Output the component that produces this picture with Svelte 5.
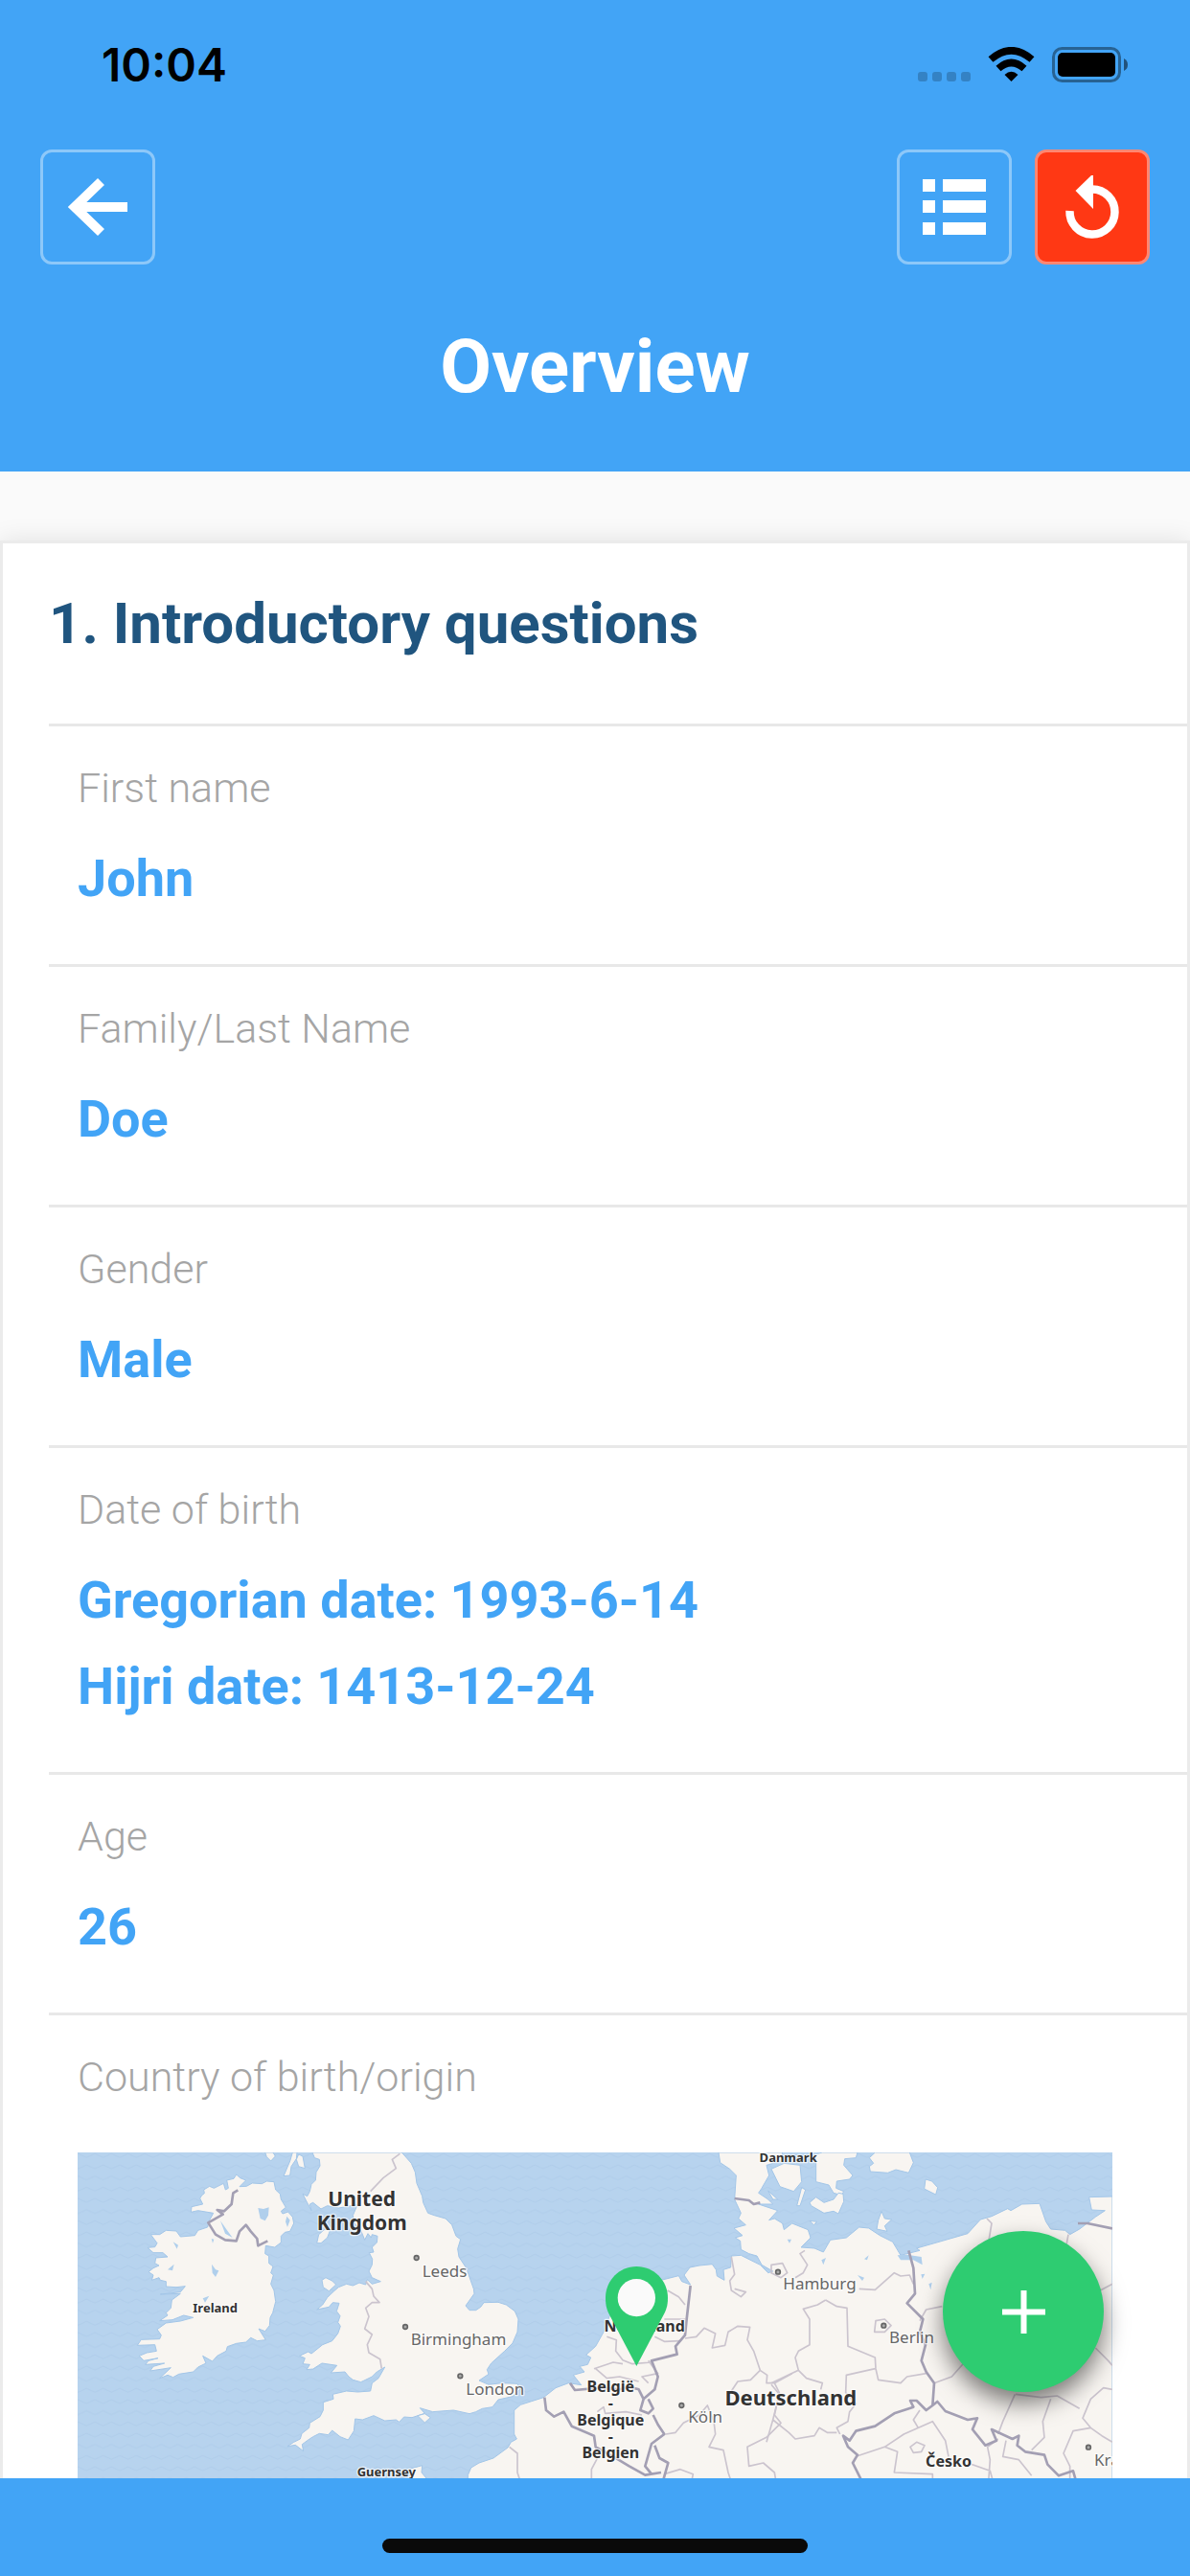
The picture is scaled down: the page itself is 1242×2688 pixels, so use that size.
<script>
  const fields = [
    { label: "First name", values: ["John"] },
    { label: "Family/Last Name", values: ["Doe"] },
    { label: "Gender", values: ["Male"] },
    {
      label: "Date of birth",
      values: ["Gregorian date: 1993-6-14", "Hijri date: 1413-12-24"],
    },
    { label: "Age", values: ["26"] },
  ];

  // map units, three to a pixel at full phone width
  const countries = [
    { name: "United", x: 953, y: 245, size: 63 },
    { name: "Kingdom", x: 953, y: 320, size: 63 },
    { name: "Ireland", x: 494, y: 578, size: 39 },
    { name: "Guernsey", x: 1030, y: 1092, size: 39 },
    { name: "Nederland", x: 1838, y: 640, size: 48 },
    { name: "België", x: 1732, y: 828, size: 48 },
    { name: "-", x: 1732, y: 880, size: 48 },
    { name: "Belgique", x: 1732, y: 932, size: 48 },
    { name: "-", x: 1732, y: 984, size: 48 },
    { name: "Belgien", x: 1732, y: 1036, size: 48 },
    { name: "Danmark", x: 2288, y: 107, size: 39 },
    { name: "Deutschland", x: 2296, y: 870, size: 66 },
    { name: "Česko", x: 2790, y: 1062, size: 48 },
  ];

  const cities = [
    { name: "Leeds", x: 1142, y: 468, dotX: 1124, dotY: 408 },
    { name: "Birmingham", x: 1106, y: 682, dotX: 1089, dotY: 624 },
    { name: "London", x: 1279, y: 837, dotX: 1261, dotY: 778 },
    { name: "Köln", x: 1975, y: 924, dotX: 1954, dotY: 870 },
    { name: "Hamburg", x: 2272, y: 508, dotX: 2256, dotY: 452 },
    { name: "Berlin", x: 2604, y: 674, dotX: 2587, dotY: 620 },
    { name: "Kraków", x: 3246, y: 1060, dotX: 3228, dotY: 1001 },
  ];
</script>

<div class="screen">
  <header>
    <div class="status">
      <time>10:04</time>
      <svg class="indicators" viewBox="0 0 220 38" aria-hidden="true">
        <g opacity="0.2">
          <rect x="0" y="26" width="10" height="10" rx="3" />
          <rect x="15" y="26" width="10" height="10" rx="3" />
          <rect x="30" y="26" width="10" height="10" rx="3" />
          <rect x="45" y="26" width="10" height="10" rx="3" />
        </g>
        <path d="M97.5 36 L90.5 29 Q97.5 22.5 104.5 29 Z" />
        <g fill="none" stroke="#000" stroke-width="7.5">
          <path d="M84 22.5 Q97.5 10.5 111 22.5" />
          <path d="M76 13 Q97.5 -5.5 119 13" />
        </g>
        <rect x="141.5" y="1.5" width="69" height="34" rx="9" fill="none" stroke="#000" stroke-width="3" opacity="0.4" />
        <rect x="146" y="6" width="60" height="25" rx="5" />
        <path d="M215 12 Q219 14 219 18.5 Q219 23 215 25 Z" opacity="0.5" />
      </svg>
    </div>

    <nav>
      <button class="tool" aria-label="Back">
        <svg viewBox="0 0 120 120">
          <path d="M63.5 33.5 L36 60 L63.5 86.500 M40 60 H91" />
        </svg>
      </button>
      <button class="tool push" aria-label="Sections">
        <svg viewBox="0 0 120 120">
          <path
            class="solid"
            d="M27 31h13v13h-13z M48 31h45v13h-45z M27 53h13v13h-13z M48 53h45v13h-45z M27 76h13v13h-13z M48 76h45v13h-45z"
          />
        </svg>
      </button>
      <button class="tool danger" aria-label="Restart">
        <svg viewBox="0 0 120 120">
          <path d="M36.5 64 A23.5 23.5 0 1 0 60 41.5" stroke-width="8.5" />
          <path class="solid" d="M42.5 43 L59 27 H61 V62 Z" />
        </svg>
      </button>
    </nav>

    <h1>Overview</h1>
  </header>

  <main>
    <section>
      <h2>1. Introductory questions</h2>
      <dl>
        {#each fields as { label, values }}
          <div class="field">
            <dt>{label}</dt>
            {#each values as value}
              <dd>{value}</dd>
            {/each}
          </div>
        {/each}
        <div class="field">
          <dt>Country of birth/origin</dt>
          <dd class="map">
            <svg viewBox="63 78 3240 1620" role="img" aria-label="Map of north-west Europe">
              <defs>
                <pattern id="waves" width="52" height="70" patternUnits="userSpaceOnUse">
                  <path d="M0 18 L13 12 L26 18 L39 24 L52 18 M0 53 L13 59 L26 53 L39 47 L52 53" fill="none" stroke="#b0cdea" stroke-width="3" />
                </pattern>
              </defs>
              <rect x="63" y="78" width="3240" height="1620" fill="#b7d3ee" />
              <rect x="63" y="78" width="3240" height="1620" fill="url(#waves)" />

              <g class="land">
                <!-- Ireland -->
                <path d="M590 165 L570 185 L592 184 L610 174 L640 176 L655 168 L678 170 L683 195 L697 208 L700 225 L715 250 L700 262 L705 270 L722 264 L736 280 L740 300 L728 325 L712 328 L700 340 L700 360 L680 375 L652 370 L650 395 L662 402 L662 425 L675 435 L668 455 L676 462 L668 490 L678 510 L683 545 L674 580 L666 595 L664 620 L650 638 L630 630 L652 665 L625 668 L605 658 L590 672 L560 676 L532 686 L528 700 L500 715 L485 732 L455 715 L465 738 L440 750 L425 765 L380 772 L362 782 L345 775 L320 785 L355 752 L290 762 L300 748 L335 738 L275 742 L285 730 L315 722 L270 730 L256 715 L280 705 L310 700 L305 680 L250 682 L262 664 L320 662 L325 650 L312 632 L340 612 L385 606 L425 595 L395 588 L360 602 L320 605 L345 588 L340 580 L355 565 L358 540 L385 520 L322 522 L385 515 L400 497 L372 500 L340 498 L340 482 L322 478 L318 470 L295 478 L300 462 L285 452 L300 440 L318 432 L305 425 L308 408 L345 405 L330 392 L300 392 L282 376 L305 374 L312 362 L292 335 L320 335 L340 322 L372 324 L385 342 L430 338 L440 322 L470 312 L475 292 L488 268 L440 260 L418 265 L420 248 L455 240 L446 222 L452 212 L460 206 L458 195 L476 184 L490 190 L520 175 L526 195 L535 190 L530 165 L552 160 L560 147 L572 158 Z" />
                <!-- Great Britain -->
                <path d="M798 78 L805 95 L820 100 L822 120 L810 140 L808 165 L795 178 L790 200 L782 215 L768 208 L778 228 L795 260 L790 240 L800 235 L825 255 L845 245 L880 252 L905 248 L940 240 L925 275 L930 300 L950 322 L962 352 L972 332 L982 345 L985 335 L1002 340 L1000 360 L985 375 L990 390 L976 392 L986 412 L985 430 L975 450 L985 470 L1012 482 L985 490 L970 476 L965 492 L945 486 L925 495 L905 490 L880 500 L866 512 L845 532 L830 555 L812 570 L850 562 L862 548 L882 550 L874 575 L885 590 L878 610 L886 622 L878 645 L860 668 L830 680 L795 708 L785 702 L758 715 L775 722 L768 740 L790 742 L780 758 L800 756 L828 738 L855 742 L875 745 L856 768 L900 765 L912 780 L925 790 L950 797 L985 780 L1000 765 L1025 750 L1005 785 L985 800 L980 825 L940 828 L905 825 L862 835 L864 850 L832 860 L832 885 L822 905 L790 925 L788 940 L765 958 L760 975 L740 985 L720 998 L745 994 L770 1013 L766 992 L785 978 L800 968 L820 958 L848 962 L860 948 L885 968 L910 978 L928 950 L932 912 L955 915 L990 902 L1025 918 L1060 915 L1070 922 L1085 906 L1110 908 L1150 895 L1135 878 L1175 890 L1200 888 L1240 885 L1290 896 L1310 890 L1330 880 L1362 875 L1380 852 L1425 842 L1448 820 L1440 802 L1390 800 L1350 805 L1320 792 L1350 772 L1345 758 L1358 738 L1400 700 L1425 675 L1440 640 L1443 600 L1432 575 L1405 555 L1380 547 L1335 548 L1325 562 L1310 572 L1290 572 L1278 558 L1305 520 L1303 505 L1280 440 L1257 405 L1253 380 L1262 350 L1248 340 L1235 305 L1215 285 L1180 275 L1160 268 L1145 235 L1142 215 L1125 175 L1120 140 L1108 112 L1078 78 Z" />
                <path d="M828 478 L840 470 L860 480 L872 492 L850 512 L832 500 Z M812 362 L818 335 L835 320 L855 318 L845 345 L825 362 Z" />
                <path d="M736 78 L728 105 L708 152 L728 150 L732 122 L748 98 L750 78 Z M755 84 L768 90 L775 128 L755 122 L748 100 Z M650 78 L655 92 L668 105 L682 90 L675 78 Z" />
                <path d="M1128 902 L1150 896 L1168 908 L1150 924 Z M1112 1098 L1105 1068 L1142 1058 L1140 1080 L1155 1098 L1155 1120 L1112 1120 Z" />
                <!-- Continent -->
                <path d="M1285 1088 L1295 1065 L1320 1050 L1365 1035 L1410 1002 L1420 985 L1438 975 L1430 960 L1430 885 L1450 868 L1522 845 L1560 815 L1600 800 L1640 806 L1615 775 L1650 765 L1635 748 L1660 742 L1670 720 L1655 712 L1685 685 L1710 640 L1740 560 L1760 510 L1830 500 L1890 478 L1945 464 L1955 482 L1982 492 L1962 462 L1980 438 L2010 432 L2050 428 L2062 445 L2065 465 L2088 478 L2085 445 L2108 438 L2110 402 L2140 400 L2160 410 L2200 430 L2225 455 L2240 450 L2205 430 L2190 402 L2165 395 L2140 382 L2138 355 L2122 345 L2145 338 L2118 315 L2155 305 L2132 285 L2140 268 L2120 225 L2125 150 L2105 130 L2075 110 L2070 78 L2270 78 L2265 105 L2220 118 L2228 150 L2205 190 L2195 205 L2225 225 L2240 240 L2195 240 L2255 260 L2228 290 L2245 285 L2270 300 L2275 320 L2300 300 L2350 320 L2358 345 L2328 375 L2370 378 L2398 390 L2420 352 L2470 345 L2510 312 L2540 315 L2575 338 L2615 358 L2640 400 L2700 385 L2690 378 L2760 358 L2850 332 L2890 288 L2925 278 L2975 254 L2985 260 L3020 240 L3075 238 L3095 295 L3110 318 L3155 322 L3170 335 L3200 318 L3250 280 L3280 260 L3238 258 L3230 218 L3303 216 V1698 H1285 Z" />
                <path d="M2235 130 L2275 112 L2325 118 L2330 170 L2305 200 L2262 185 Z M2375 110 L2372 84 L2395 78 H2505 L2500 95 L2465 98 L2462 118 L2490 150 L2480 162 L2440 168 L2438 190 L2462 200 L2455 212 L2430 205 L2415 180 L2375 170 Z" />
                <path d="M2542 95 L2560 78 H2668 L2680 110 L2665 142 L2625 132 L2600 142 L2545 138 L2542 122 L2555 112 Z M2718 162 L2738 168 L2756 188 L2750 210 L2714 192 Z" />
                <path d="M2355 235 L2375 218 L2400 235 L2430 225 L2445 205 L2460 208 L2462 232 L2445 270 L2430 262 L2400 268 L2360 245 Z M2570 290 L2580 262 L2590 285 L2612 288 L2590 308 L2598 325 L2565 318 Z" />
                <path d="M2330 188 L2342 195 L2325 245 L2315 245 Z M2355 292 L2378 295 L2368 305 Z M2225 198 L2255 225 L2240 225 Z" />
              </g>

              <!-- lakes and inlets -->
              <path
                fill="#b0cfec"
                d="M628 252 L645 255 L662 250 L660 275 L650 292 L635 285 Z M718 278 L728 290 L720 312 L714 295 Z M483 428 L495 445 L505 448 L495 468 L485 455 Z M362 358 L378 368 L374 380 Z M482 348 L490 350 L486 362 Z M455 535 L475 527 L462 548 Z M345 445 L365 428 L360 448 Z M510 292 L530 320 L548 345 L525 332 Z M2630 400 L2660 398 L2705 405 L2708 430 L2680 415 L2640 415 Z M2392 415 L2406 408 L2398 430 Z M2526 412 L2540 400 L2535 415 Z M2505 462 L2526 470 L2520 480 Z M2704 460 L2716 458 L2708 474 Z M2728 490 L2738 485 L2734 508 Z M2285 350 L2298 350 L2292 362 Z"
              />

              <g class="thin">
                <path d="M1072 82 L1048 100 L1060 128 L1020 158 L980 200 M965 482 L985 505 L990 528 L1008 548 L985 548 L965 565 L975 592 L962 630 L985 648 L970 680 L975 705 L1010 725 L1015 755" />
                <!-- Low Countries and France -->
                <path d="M1680 755 L1740 735 L1770 740 M1720 655 L1750 665 L1748 700 L1770 728 L1800 740 L1860 735 M1870 655 L1900 670 L1950 668 M1910 510 L1945 530 L1965 555 M1900 600 L1965 600 M1685 755 L1720 785 L1760 780 L1820 795 M1690 890 L1710 875 L1715 895 L1780 890 L1830 900 M1415 1000 L1440 1020 L1440 1080 L1450 1110 M1690 1036 L1672 1070 L1672 1110 M1850 730 L1880 770 L1830 780 L1850 800" />
                <!-- western Germany -->
                <path d="M1965 660 L2000 655 L2025 628 L2060 645 L2050 690 L2090 682 L2100 640 L2130 622 L2168 625 L2160 665 L2180 700 L2200 760 L2170 790 L2130 795 L2110 825 M2200 760 L2222 775 L2220 800 L2245 800 L2300 770 M2110 405 L2120 460 L2105 480 L2110 510 L2140 530 L2155 515 L2120 505 M1905 960 L1935 955 L1960 925 L2010 900 L2035 870 L2055 920 L2060 960 L2040 1000 L2085 1010 L2100 1080 L2110 1110 M2245 800 L2260 830 L2245 900 L2265 925 L2220 970 L2160 1000 L2165 1060 L2210 1050 L2245 1080 L2250 1110 M1900 1085 L1950 1070 L1990 1085 L1985 1110" />
                <!-- eastern Germany -->
                <path d="M2340 385 L2325 395 L2348 430 L2335 455 L2310 470 M2510 505 L2560 508 L2620 455 L2640 465 L2668 462 L2680 490 M2405 540 L2380 555 L2335 568 L2355 600 L2355 680 L2320 700 L2310 720 L2320 760 L2235 800 M2405 540 L2440 560 L2472 565 L2475 685 L2560 720 L2562 755 L2570 790 L2640 800 L2660 780 L2720 770 M2560 755 L2470 775 L2468 830 L2500 865 L2480 890 L2475 920 L2440 940 L2450 960 M2235 805 L2260 835 L2240 915 L2290 955 L2310 975 L2370 965 L2385 940 L2410 955 L2440 955 M2320 760 L2345 785 L2395 800 L2390 820 M2240 915 L2220 985 M2558 640 L2562 605 L2590 600 L2610 620 L2590 640 Z M2235 430 L2270 425 L2285 455 L2265 470 L2235 455 Z" />
                <!-- Poland and Bohemia -->
                <path d="M2910 285 L2925 300 L2915 360 M3165 335 L3155 390 M2700 605 L2720 570 L2770 560 M2745 800 L2800 780 L2840 735 M3303 490 L3265 510 M3250 690 L3290 730 L3303 745 M2998 835 L2960 920 L2945 960 M3000 835 L3080 845 L3130 840 L3200 880 M3110 850 L3085 920 L3090 970 L3050 1010 M3303 820 L3275 815 L3235 850 L3210 910 L3235 940 L3270 965 L3303 985 M3235 940 L3180 950 L3150 1020 L3170 1060 L3170 1110 M2500 1030 L2590 1000 L2630 1015 L2620 1080 L2740 1085 L2740 1110 M2590 1000 L2650 960 L2740 920 L2780 980 L2790 1030 M2700 885 L2680 915 L2695 940 M2850 1050 L2920 1075 L2930 1110 M2915 1110 L2920 1040 L2912 1000 L2945 975 M2970 980 L2960 1030 L3010 1040 L3050 1090 M2670 1000 L2690 985 L2715 995 L2705 1015 L2680 1018 Z" />
              </g>

              <g class="border">
                <path d="M565 196 L550 205 L545 240 L522 262 L500 258 L518 272 L472 298 L495 335 L525 352 L560 355 L570 325 L590 305 L605 325 L625 348 L628 370 L658 355" />
                <path d="M1982 495 L1970 600 L1965 650 L1935 685 L1940 710 L1860 730 L1880 780 L1870 820 L1835 850 L1825 885 L1850 895 L1865 880 L1850 850 M1835 850 L1820 820 L1790 812 L1760 820 L1700 815 L1620 822 L1605 800" />
                <path d="M1525 845 L1530 885 L1555 905 L1585 890 L1610 935 L1680 965 L1685 1000 L1740 1030 L1790 1060 L1840 1088 L1890 1080 M1865 900 L1880 930 L1900 960 L1860 990 L1840 1060 L1860 1085 M1870 995 L1885 1035 L1912 1050 L1895 1110" />
                <path d="M2120 222 L2165 228 L2180 240 L2200 235 M2665 385 L2680 440 L2685 520 L2660 550 L2710 600 L2700 640 L2718 680 L2705 730 L2720 765 L2745 800 L2740 870 L2720 885 L2690 855 L2670 855 L2680 875 L2620 895 L2560 935 L2500 950 L2480 980 L2460 965 L2475 1000 L2505 1025 L2490 1050 L2520 1110 M2740 870 L2755 858 L2780 888 L2850 915 L2880 910 L2865 945 L2905 995 L2940 980 L2925 945 L2990 975 L3010 965 L3005 995 L3030 1015 L3090 1025 L3100 1055 L3135 1090 L3180 1075 L3190 1110 M3195 300 L3225 300 L3303 316" />
              </g>

              {#each cities as { name, x, y, dotX, dotY }}
                <circle class="town" cx={dotX} cy={dotY} r="7" />
                <text class="city" {x} {y}>{name}</text>
              {/each}
              {#each countries as { name, x, y, size }}
                <text class="country" {x} {y} font-size={size}>{name}</text>
              {/each}

              <path
                fill="#2ecc71"
                d="M1813 435 C1867 435 1911 479 1911 533 C1911 560 1905 573 1895 592 L1813 747 L1731 592 C1721 573 1716 560 1716 533 C1716 479 1759 435 1813 435 Z"
              />
              <circle cx="1813" cy="533" r="59" fill="#fafafa" />
            </svg>
          </dd>
        </div>
      </dl>
    </section>
  </main>

  <footer>
    <button class="add" aria-label="Add">
      <svg viewBox="0 0 45 45"><path d="M0 22.5 H45 M22.5 0 V45" /></svg>
    </button>
    <div class="home"></div>
  </footer>
</div>

<style>
  :global(body) {
    margin: 0;
  }

  .screen {
    display: flex;
    flex-direction: column;
    height: 100vh;
    overflow: hidden;
    background-color: #fafafa;
    font-family: Roboto, "Open Sans", sans-serif;
  }

  header {
    flex: none;
    padding: 0 42px 64px;
    background-color: #42a4f6;
    color: white;
  }

  .status {
    display: flex;
    align-items: center;
    justify-content: space-between;
    padding: 38px 22px 34px 64px;
    color: black;
  }

  time {
    font-family: Inter, sans-serif;
    font-size: 48px;
    font-weight: 600;
    line-height: 60px;
  }

  .indicators {
    width: 220px;
    height: 38px;
  }

  nav {
    display: flex;
    gap: 24px;
    padding-top: 24px;
  }

  .tool {
    width: 120px;
    height: 120px;
    padding: 0;
    border: 3px solid rgba(255, 255, 255, 0.4);
    border-radius: 12px;
    background-color: transparent;
  }

  .tool svg {
    display: block;
    width: 120px;
    height: 120px;
    margin: -3px;
    fill: none;
    stroke: white;
    stroke-width: 10;
  }

  .tool .solid {
    fill: white;
    stroke: none;
  }

  .push {
    margin-left: auto;
  }

  .danger {
    background-color: #ff3814;
  }

  h1 {
    margin: 62px 0 0;
    font-size: 78px;
    font-weight: 700;
    line-height: 90px;
    text-align: center;
  }

  main {
    flex: 1;
    min-height: 0;
    padding-top: 72px;
    overflow: hidden;
  }

  section {
    border: 3px solid #ebebeb;
    padding-left: 48px;
    background-color: white;
    box-shadow: 0 0 24px rgba(0, 0, 0, 0.1);
  }

  h2 {
    margin: 0;
    padding: 48px 0 68px;
    color: #20557f;
    font-size: 60px;
    font-weight: 700;
    line-height: 72px;
  }

  dl {
    margin: 0;
  }

  .field {
    padding: 34px 78px 44px 30px;
    border-top: 3px solid #e8e8e8;
  }

  dt {
    margin-bottom: 20px;
    color: #a5a5a5;
    font-size: 43px;
    font-weight: 300;
    line-height: 60px;
  }

  dd {
    margin: 0;
    color: #42a4f6;
    font-size: 54px;
    font-weight: 700;
    line-height: 90px;
  }

  .map {
    margin-top: 49px;
    line-height: 0;
  }

  .map svg {
    width: 100%;
  }

  .land path {
    fill: #f8f5f1;
    stroke: #a3c6e8;
    stroke-width: 3;
    stroke-linejoin: round;
  }

  .thin path {
    fill: none;
    stroke: #cbc4ce;
    stroke-width: 5;
    stroke-linejoin: round;
  }

  .border path {
    fill: none;
    stroke: #a39fb3;
    stroke-width: 8;
    stroke-linejoin: round;
  }

  .town {
    fill: #aaa;
    stroke: #666;
    stroke-width: 5;
  }

  .map text {
    font-family: "Noto Sans", sans-serif;
    paint-order: stroke;
    stroke: rgba(255, 255, 255, 0.7);
    stroke-width: 8;
    stroke-linejoin: round;
  }

  .city {
    fill: #666;
    font-size: 51px;
    font-weight: 400;
  }

  .country {
    fill: #333;
    font-weight: 700;
    text-anchor: middle;
  }

  footer {
    position: relative;
    flex: none;
    display: flex;
    justify-content: center;
    padding: 63px 0 24px;
    background-color: #42a4f6;
  }

  .home {
    width: 444px;
    height: 15px;
    border-radius: 8px;
    background-color: #0a0a0a;
  }

  .add {
    position: absolute;
    right: 90px;
    bottom: 192px;
    display: flex;
    align-items: center;
    justify-content: center;
    width: 168px;
    height: 168px;
    padding: 0;
    border: 0;
    border-radius: 50%;
    background-color: #2ecc71;
    box-shadow: 0 12px 24px rgba(0, 0, 0, 0.5);
  }

  .add svg {
    width: 45px;
    height: 45px;
    stroke: white;
    stroke-width: 6;
  }
</style>
